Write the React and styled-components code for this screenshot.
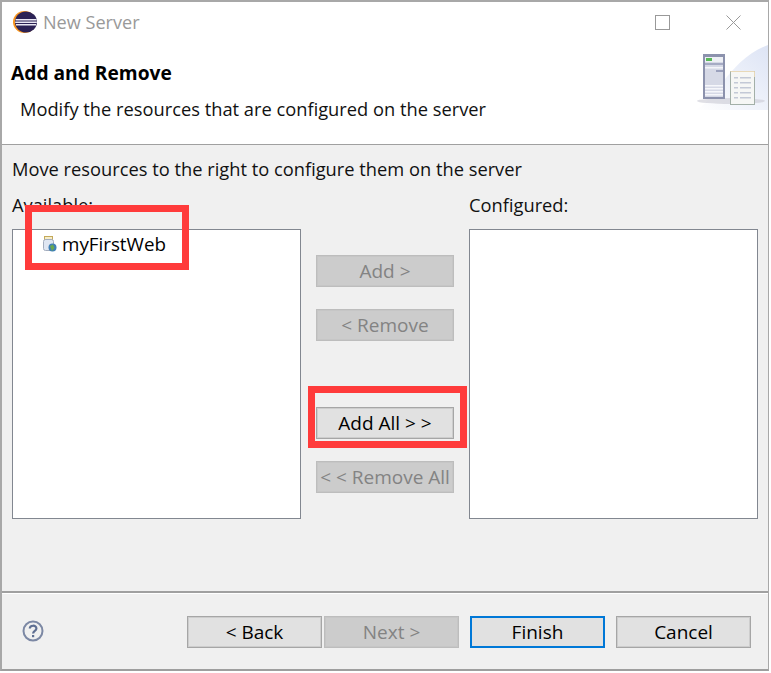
import React from "react";
import styled, { createGlobalStyle } from "styled-components";

const GlobalStyle = createGlobalStyle`
  html, body {
    margin: 0;
    background: #fff;
  }
  * {
    box-sizing: border-box;
  }
`;

const Page = styled.div`
  position: relative;
  width: 771px;
  height: 673px;
  overflow: hidden;
  font-family: "Open Sans", "Noto Sans", sans-serif;
  font-size: 18.3px;
  color: #111;
`;

const Window = styled.div`
  display: flex;
  flex-direction: column;
  width: 769px;
  height: 671px;
  border-top: 2px solid #a8a8a8;
  border-left: 2px solid #a8a8a8;
  border-right: 1px solid #a8a8a8;
  border-bottom: 2px solid #9e9e9e;
  background: #f0f0f0;
`;

const Header = styled.div`
  height: 143px;
  flex: none;
  background: #fff;
  border-bottom: 1px solid #a0a0a0;
`;

const TitleBar = styled.div`
  display: flex;
  align-items: center;
  height: 41px;
  padding: 0 0 1px 11px;
`;

const WindowTitle = styled.span`
  margin-left: 6px;
  font-size: 18.1px;
  color: #999;
`;

const WindowControls = styled.div`
  display: flex;
  align-items: center;
  margin-left: auto;
  padding-right: 27px;
  gap: 56px;
`;

const Banner = styled.div`
  display: flex;
  justify-content: space-between;
`;

const BannerText = styled.div`
  padding-left: 9px;
`;

const Heading = styled.div`
  margin-top: 16px;
  font-size: 19.2px;
  font-weight: 700;
  line-height: 28px;
  color: #000;
`;

const SubHeading = styled.div`
  margin-top: 9px;
  padding-left: 9px;
  line-height: 26px;
`;

const Art = styled.svg`
  margin-top: 2px;
  flex: none;
`;

const Body = styled.div`
  flex: 1;
  padding: 10px 10px 0;
`;

const Intro = styled.div`
  line-height: 28px;
`;

const Columns = styled.div`
  display: grid;
  grid-template-columns: 289px 168px 289px;
  margin-top: 9px;
`;

const Label = styled.div`
  line-height: 26px;
  height: 37px;
`;

const ListBox = styled.div`
  height: 290px;
  padding: 2px 0 0 30px;
  background: #fff;
  border: 1px solid #828790;
`;

const ListRow = styled.div`
  display: flex;
  align-items: center;
  gap: 5px;
  height: 24px;
  font-size: 18.8px;
  color: #000;
`;

const Actions = styled.div`
  display: flex;
  flex-direction: column;
  gap: 22px;
  padding: 63px 0 0 15px;
`;

const Button = styled.div`
  display: flex;
  align-items: center;
  justify-content: center;
  width: ${({ $wide }) => ($wide ? "135px" : "138px")};
  height: 32px;
  margin-top: ${({ $spaced }) => ($spaced ? "44px" : "0")};
  font-size: 19px;
  white-space: nowrap;
  color: ${({ $disabled }) => ($disabled ? "#838383" : "#000")};
  background: ${({ $disabled }) => ($disabled ? "#cccccc" : "#e1e1e1")};
  border: ${({ $default }) => ($default ? "2px" : "1px")} solid;
  border-color: ${({ $default, $disabled }) =>
    $default ? "#0078d7" : $disabled ? "#bdbdbd" : "#a6a6a6"};
  box-shadow: ${({ $default, $disabled }) =>
    $default ? "none" : `inset 0 0 0 1px ${$disabled ? "#c6c6c6" : "#cdcdcd"}`};
`;

const Footer = styled.div`
  display: flex;
  align-items: flex-start;
  flex: none;
  height: 78px;
  padding: 23px 0 0 20px;
  border-top: 2px solid #a0a0a0;
  box-shadow: inset 0 1px 0 #fff;
`;

const HelpIcon = styled.svg`
  margin-top: 4px;
  flex: none;
`;

const NavButtons = styled.div`
  display: flex;
  margin-left: 143px;
  gap: 2px;
`;

const DialogButtons = styled.div`
  display: flex;
  margin-left: 11px;
  gap: 11px;
`;

/* the red boxes somebody drew on top of the screenshot */
const Highlight = styled.div`
  position: absolute;
  left: ${({ $x }) => $x}px;
  top: ${({ $y }) => $y}px;
  width: ${({ $w }) => $w}px;
  height: ${({ $h }) => $h}px;
  border: 7px solid #ff3b3b;
`;

const EclipseLogo = () => (
  <svg width="24" height="22" viewBox="0 0 24 22">
    <ellipse cx="11.5" cy="11" rx="11.5" ry="11" fill="#f7941e" />
    <ellipse cx="13" cy="11" rx="11" ry="10.5" fill="#2c2255" />
    <g fill="#e9e7f3">
      <rect x="2.6" y="8" width="21" height="1.5" />
      <rect x="2.2" y="10.5" width="21.6" height="1.5" />
      <rect x="3" y="13" width="20" height="1.5" />
    </g>
  </svg>
);

const ServerArt = () => (
  <Art width="73" height="66" viewBox="0 0 73 66">
    <defs>
      <linearGradient id="glow" x1="0" y1="1" x2="1" y2="0">
        <stop offset="0" stopColor="#ffffff" />
        <stop offset="1" stopColor="#dde4f5" />
      </linearGradient>
    </defs>
    <path d="M0 65 C18 60 34 14 73 0 V65 Z" fill="url(#glow)" />
    <ellipse cx="36" cy="56" rx="34" ry="3" fill="#c9c9d4" opacity="0.6" />
    <rect x="8" y="9" width="22" height="45" fill="#8c92ad" />
    <rect x="10" y="12" width="18" height="40" fill="#d6d9e6" />
    <rect x="10" y="12" width="18" height="5" fill="#eef0f5" />
    <rect x="11" y="13" width="6" height="3" fill="#58b858" />
    <rect x="10" y="18" width="18" height="2" fill="#a6abc4" />
    <rect x="10" y="22" width="18" height="1.5" fill="#f4f5fa" />
    <rect x="21" y="25" width="7" height="2" fill="#9aa0bc" />
    <g fill="#f6f7fb">
      <rect x="10" y="40" width="18" height="1.5" />
      <rect x="10" y="43" width="18" height="1.5" />
      <rect x="10" y="46" width="18" height="1.5" />
      <rect x="10" y="49" width="18" height="1.5" />
    </g>
    <rect x="35.5" y="26.5" width="24" height="33" fill="#f6f7f5" stroke="#a3b0a8" />
    <path d="M35.5 26.5 H59.5 V32" fill="none" stroke="#e8d9b8" />
    <g fill="#c3c9d6">
      <rect x="39" y="32" width="4" height="1.5" />
      <rect x="45" y="32" width="11" height="1.5" />
      <rect x="39" y="37" width="4" height="1.5" />
      <rect x="45" y="37" width="11" height="1.5" />
      <rect x="39" y="42" width="4" height="1.5" />
      <rect x="45" y="42" width="11" height="1.5" />
      <rect x="39" y="47" width="4" height="1.5" />
      <rect x="45" y="47" width="11" height="1.5" />
      <rect x="39" y="52" width="4" height="1.5" />
      <rect x="45" y="52" width="11" height="1.5" />
    </g>
  </Art>
);

const ProjectIcon = () => (
  <svg width="14" height="16" viewBox="0 0 14 16">
    <rect x="1.5" y="0.5" width="8" height="3" fill="#f6edc8" stroke="#c4a95a" />
    <rect x="0.5" y="3.5" width="10" height="11" rx="2" fill="#dfe6f2" stroke="#a3adbe" />
    <circle cx="9.5" cy="11.5" r="4" fill="#3f7fb5" />
    <path d="M7 10 L10 8.5 L11.5 12 L9 15 Z" fill="#6aa84f" />
  </svg>
);

const App = () => (
  <Page>
    <GlobalStyle />
    <Window>
      <Header>
        <TitleBar>
          <EclipseLogo />
          <WindowTitle>New Server</WindowTitle>
          <WindowControls>
            <svg width="15" height="15" viewBox="0 0 15 15">
              <rect x="0.5" y="0.5" width="14" height="14" fill="none" stroke="#999" />
            </svg>
            <svg width="15" height="15" viewBox="0 0 15 15">
              <path d="M0.5 0.5 L14.5 14.5 M14.5 0.5 L0.5 14.5" stroke="#999" fill="none" />
            </svg>
          </WindowControls>
        </TitleBar>
        <Banner>
          <BannerText>
            <Heading>Add and Remove</Heading>
            <SubHeading>Modify the resources that are configured on the server</SubHeading>
          </BannerText>
          <ServerArt />
        </Banner>
      </Header>
      <Body>
        <Intro>Move resources to the right to configure them on the server</Intro>
        <Columns>
          <div>
            <Label>Available:</Label>
            <ListBox>
              <ListRow>
                <ProjectIcon />
                myFirstWeb
              </ListRow>
            </ListBox>
          </div>
          <Actions>
            <Button $disabled>Add &gt;</Button>
            <Button $disabled>&lt; Remove</Button>
            <Button $spaced>Add All &gt; &gt;</Button>
            <Button $disabled>&lt; &lt; Remove All</Button>
          </Actions>
          <div>
            <Label>Configured:</Label>
            <ListBox />
          </div>
        </Columns>
      </Body>
      <Footer>
        <HelpIcon width="22" height="22" viewBox="0 0 22 22">
          <circle cx="11" cy="11" r="9.5" fill="none" stroke="#7c88a4" strokeWidth="2" />
          <path
            d="M7.8 8.6 C7.8 4.8 14.4 4.8 14.4 8.4 C14.4 10.8 11.1 10.8 11.1 13.4"
            fill="none"
            stroke="#5f6f92"
            strokeWidth="2.2"
          />
          <rect x="10" y="15" width="2.2" height="2.2" fill="#5f6f92" />
        </HelpIcon>
        <NavButtons>
          <Button $wide>&lt; Back</Button>
          <Button $wide $disabled>Next &gt;</Button>
        </NavButtons>
        <DialogButtons>
          <Button $wide $default>Finish</Button>
          <Button $wide>Cancel</Button>
        </DialogButtons>
      </Footer>
    </Window>
    <Highlight $x={25} $y={205} $w={164} $h={65} />
    <Highlight $x={308} $y={386} $w={159} $h={62} />
  </Page>
);

export default App;
